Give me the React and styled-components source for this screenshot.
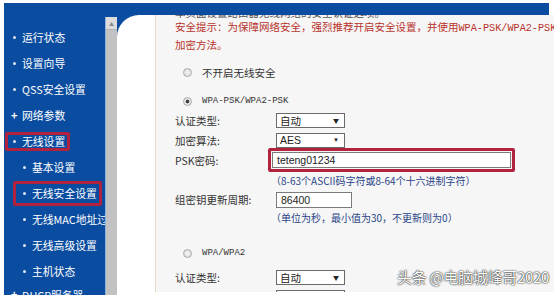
import styled, { createGlobalStyle } from "styled-components";

const GlobalStyle = createGlobalStyle`
  body {
    margin: 0;
    background: #fff;
    font-family: "Noto Sans CJK SC", "Liberation Sans", sans-serif;
  }
`;

const BLUE = "#0a4ca0";
const CRIMSON = "#b0223d";

const menu = [
  { text: "运行状态" },
  { text: "设置向导" },
  { text: "QSS安全设置" },
  { text: "网络参数", plus: true },
  { text: "无线设置", boxed: true },
  { text: "基本设置", sub: true },
  { text: "无线安全设置", sub: true, boxed: true },
  { text: "无线MAC地址过滤", sub: true },
  { text: "无线高级设置", sub: true },
  { text: "主机状态", sub: true },
  { text: "DHCP服务器", plus: true, last: true },
];

const App = () => {
  return (
    <>
      <GlobalStyle />
      <Page>
        <Header />
        <Body>
          <Sidebar>
            {menu.map((item) => (
              <MenuItem key={item.text} $sub={item.sub} $last={item.last}>
                <MenuLabel $boxed={item.boxed} $sub={item.sub}>
                  {item.plus ? <Plus>+</Plus> : <Dot />}
                  {item.text}
                </MenuLabel>
              </MenuItem>
            ))}
          </Sidebar>
          <ScrollTrack>
            <ScrollBar>
              <ScrollArrow>▲</ScrollArrow>
            </ScrollBar>
          </ScrollTrack>
          <ContentWrap>
            <Card>
              <Panel>
                <TitleClip>
                  <CutTitle>本页面设置路由器无线网络的安全认证选项。</CutTitle>
                </TitleClip>
                <Tip>
                  安全提示：为保障网络安全，强烈推荐开启安全设置，并使用
                  <Mono $size="10.2px">WPA-PSK/WPA2-PSK A</Mono>
                  <br />
                  加密方法。
                </Tip>
                <RadioRow $top="10px">
                  <Radio />
                  <span>不开启无线安全</span>
                </RadioRow>
                <RadioRow $top="11px">
                  <Radio $checked />
                  <Mono $size="9px">WPA-PSK/WPA2-PSK</Mono>
                </RadioRow>
                <FieldRow>
                  <Label>认证类型:</Label>
                  <Select>
                    自动<Arrow>▼</Arrow>
                  </Select>
                </FieldRow>
                <FieldRow>
                  <Label>加密算法:</Label>
                  <Select $latin>
                    AES<Arrow>▼</Arrow>
                  </Select>
                </FieldRow>
                <FieldRow>
                  <Label>PSK密码:</Label>
                  <RedFrame>
                    <Input $width="100%">teteng01234</Input>
                  </RedFrame>
                </FieldRow>
                <Hint $height="20px">（8-63个ASCII码字符或8-64个十六进制字符）</Hint>
                <FieldRow $height="19px">
                  <Label>组密钥更新周期:</Label>
                  <Input $width="76px">86400</Input>
                </FieldRow>
                <Hint $height="16px">（单位为秒，最小值为30，不更新则为0）</Hint>
                <RadioRow $top="19px">
                  <Radio />
                  <Mono $size="9px">WPA/WPA2</Mono>
                </RadioRow>
                <FieldRow $top="5px">
                  <Label>认证类型:</Label>
                  <Select>
                    自动<Arrow>▼</Arrow>
                  </Select>
                </FieldRow>
                <FieldRow>
                  <Label>加密算法:</Label>
                  <Select>
                    自动<Arrow>▼</Arrow>
                  </Select>
                </FieldRow>
              </Panel>
            </Card>
          </ContentWrap>
        </Body>
        <Watermark>头条 @电脑城峰哥2020</Watermark>
      </Page>
    </>
  );
};

export default App;

const Page = styled.div`
  position: relative;
  width: 558px;
  height: 295px;
  box-sizing: border-box;
  padding: 3px 4px 0 4px;
  display: grid;
  grid-template-rows: 12px 280px;
  overflow: hidden;
`;

const Header = styled.div`
  margin-right: 5px;
  background: ${BLUE};
`;

const Body = styled.div`
  display: flex;
  height: 280px;
  overflow: hidden;
`;

const Sidebar = styled.div`
  width: 101px;
  flex-shrink: 0;
  background: ${BLUE};
  padding-top: 9px;
  overflow: hidden;
  color: #fff;
  font-size: 10.8px;
`;

const MenuItem = styled.div`
  height: ${(p) => (p.$last ? "20px" : "26px")};
  display: flex;
  align-items: ${(p) => (p.$last ? "flex-end" : "center")};
  padding-left: ${(p) => (p.$sub ? "9px" : "1px")};
  white-space: nowrap;
`;

const MenuLabel = styled.span`
  display: inline-flex;
  align-items: center;
  box-sizing: border-box;
  height: ${(p) => (p.$sub ? "25px" : "19px")};
  padding: 0 2px 0 ${(p) => (p.$sub ? "5px" : "3px")};
  border: 3px solid ${(p) => (p.$boxed ? CRIMSON : "transparent")};
  border-radius: 2px;
`;

const Dot = styled.span`
  width: 3px;
  height: 3px;
  border-radius: 50%;
  background: #dfe8f5;
  margin: 0 6px 0 2px;
`;

const Plus = styled.span`
  width: 9px;
  margin-right: 2px;
  font-size: 11px;
  font-weight: bold;
  line-height: 1;
`;

const ScrollTrack = styled.div`
  width: 12px;
  flex-shrink: 0;
  padding-top: 2px;
  background: ${BLUE};
  display: flex;
`;

const ScrollBar = styled.div`
  flex: 1;
  background: #c2c2c2;
  border-left: 1px solid #8fb3df;
  display: flex;
  flex-direction: column;
`;

const ScrollArrow = styled.div`
  height: 13px;
  background: #dcdcdc;
  border-bottom: 1px solid #b4b4b4;
  color: #888;
  font-size: 5px;
  display: flex;
  justify-content: center;
  padding-top: 3px;
  box-sizing: border-box;
`;

const ContentWrap = styled.div`
  flex: 1;
  display: flex;
  padding-bottom: 3px;
  background: linear-gradient(${BLUE}, ${BLUE}) 0 0 / 30px 30px no-repeat;
`;

const Card = styled.div`
  flex: 1;
  display: flex;
  background: #fff;
  border-top-left-radius: 22px;
  padding-left: 38px;
  overflow: hidden;
`;

const Panel = styled.div`
  flex: 1;
  display: flex;
  flex-direction: column;
  background: #f6f6f6;
  border-left: 1px solid #e6d8c4;
  border-right: 1px solid #d6d6d6;
  padding-left: 19px;
  overflow: hidden;
  font-size: 10.5px;
  color: #333;
  white-space: nowrap;
`;

const TitleClip = styled.div`
  height: 5px;
  flex-shrink: 0;
  overflow: hidden;
  display: flex;
  align-items: flex-end;
`;

const CutTitle = styled.div`
  line-height: 14px;
  flex-shrink: 0;
  color: #555;
`;

const Tip = styled.div`
  line-height: 16px;
  margin-top: -1px;
  flex-shrink: 0;
  color: #b8322b;
`;

const Mono = styled.span`
  font-family: "Liberation Mono", monospace;
  font-size: ${(p) => p.$size};
`;

const RadioRow = styled.div`
  height: 18px;
  margin-top: ${(p) => p.$top || "0"};
  display: flex;
  align-items: center;
  flex-shrink: 0;
`;

const Radio = styled.span`
  width: 9px;
  height: 9px;
  box-sizing: border-box;
  margin: 0 10px 0 8px;
  border-radius: 50%;
  border: 1px solid #a9a9a9;
  background: ${(p) =>
    p.$checked
      ? "radial-gradient(circle, #444 0 1.6px, #e6e6e6 2.2px)"
      : "radial-gradient(circle, #f4f4f4, #d8d8d8)"};
`;

const FieldRow = styled.div`
  height: ${(p) => p.$height || "20px"};
  margin-top: ${(p) => p.$top || "0"};
  display: flex;
  align-items: center;
  flex-shrink: 0;
`;

const Label = styled.span`
  width: 101px;
  flex-shrink: 0;
`;

const Select = styled.span`
  width: 69px;
  height: 15px;
  box-sizing: border-box;
  display: flex;
  align-items: center;
  justify-content: space-between;
  padding: 0 5px 0 3px;
  background: #fff;
  border: 1px solid #6a6a6a;
  font-family: ${(p) =>
    p.$latin ? '"Liberation Sans", sans-serif' : '"Noto Sans CJK SC", sans-serif'};
  color: #222;
`;

const Arrow = styled.span`
  font-size: 6px;
  color: #222;
`;

const RedFrame = styled.div`
  width: 247px;
  margin-left: -8px;
  box-sizing: border-box;
  border: 3px solid ${CRIMSON};
  border-radius: 2px;
  padding: 1px;
  display: flex;
`;

const Input = styled.span`
  width: ${(p) => p.$width};
  height: 16px;
  box-sizing: border-box;
  display: flex;
  align-items: center;
  padding-left: 4px;
  background: #fff;
  border: 1px solid #7a7a7a;
  font-family: "Liberation Sans", sans-serif;
  font-size: 10.5px;
  color: #222;
`;

const Hint = styled.div`
  height: ${(p) => p.$height};
  display: flex;
  align-items: center;
  padding-left: 96px;
  font-size: 10px;
  color: #2a4488;
  flex-shrink: 0;
`;

const Watermark = styled.div`
  position: absolute;
  right: 9px;
  bottom: 8px;
  font-size: 15px;
  color: #fff;
  letter-spacing: -0.3px;
  text-shadow: 0 0 2px rgba(0, 0, 0, 0.85), 0 0 1px rgba(0, 0, 0, 0.9);
`;
